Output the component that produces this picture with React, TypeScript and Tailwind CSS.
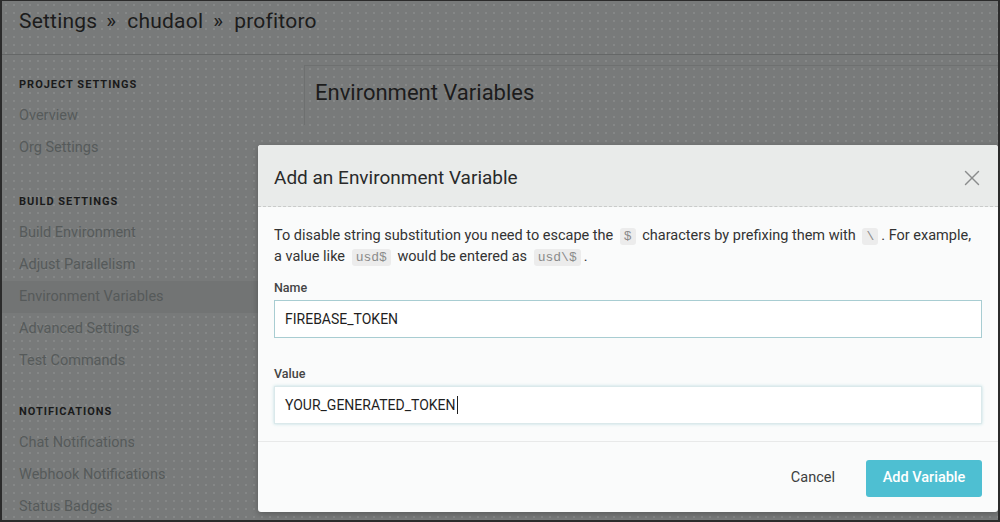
import { X } from "lucide-react";

const sections = [
  { title: "PROJECT SETTINGS", items: ["Overview", "Org Settings"] },
  {
    title: "BUILD SETTINGS",
    items: ["Build Environment", "Adjust Parallelism", "Environment Variables", "Advanced Settings", "Test Commands"],
  },
  { title: "NOTIFICATIONS", items: ["Chat Notifications", "Webhook Notifications", "Status Badges"] },
];

const sectionGap = ["", "mt-[23px]", "mt-[20px]"];

const Code = ({ children }: { children: string }) => (
  <code className="mx-[3px] rounded-[3px] bg-[#ececec] px-[4px] py-[1px] font-['Liberation_Mono',monospace] text-[13px] text-[#8a8a8a]">
    {children}
  </code>
);

export default function App() {
  return (
    <div className="relative h-[522px] w-[1000px] overflow-hidden border-x-2 border-t border-b-2 border-[#2b2b2b] bg-[#787a7a] font-['Roboto',sans-serif] bg-[radial-gradient(#858787_1px,transparent_1px)] bg-[length:8px_8px]">
      <header className="flex h-[54px] items-start border-b border-[#656767] pl-[17px] pt-[5px]">
        <h1 className="flex text-[21px] tracking-[0.2px] text-[#1c1c1c]">
          <span>Settings</span>
          <span className="mr-[11px] ml-[9px]">»</span>
          <span>chudaol</span>
          <span className="mr-[11px] ml-[10px]">»</span>
          <span>profitoro</span>
        </h1>
      </header>

      <div className="flex">
        <nav className="w-[296px] pt-[15px]">
          {sections.map((s, i) => (
            <div key={s.title} className={sectionGap[i]}>
              <div className="flex h-[30px] items-center pl-[17px] text-[11px] font-bold tracking-[1px] text-[#1a1a1a]">
                {s.title}
              </div>
              {s.items.map((item) => (
                <div
                  key={item}
                  className={`flex h-8 items-center pl-[17px] text-[14.5px] text-[#565a5a] ${
                    item === "Environment Variables" ? "bg-[#727474]" : ""
                  }`}
                >
                  {item}
                </div>
              ))}
            </div>
          ))}
        </nav>

        <main className="flex-1 pt-[10px] pl-[6px]">
          <div className="h-[60px] border-t border-l border-[#6e7070] pl-[10px] pt-[10px]">
            <h2 className="text-[22px] text-[#1c1c1c]">Environment Variables</h2>
          </div>
        </main>
      </div>

      <div className="absolute top-[144px] left-[256px] flex h-[367px] w-[740px] flex-col overflow-hidden rounded-[3px] bg-[#fafbfb] shadow-[0_2px_6px_rgba(0,0,0,0.25)]">
        <div className="flex h-[62px] shrink-0 items-center justify-between border-b border-dashed border-[#c9cbca] bg-[#e9ebea] pt-[5px] pr-[13px] pl-[16px]">
          <h3 className="text-[19px] text-[#2a2a2a]">Add an Environment Variable</h3>
          <X size={26} strokeWidth={1.3} className="text-[#8a8c8c]" />
        </div>

        <div className="flex flex-col px-[16px] pt-[19px]">
          <p className="text-[14.5px] leading-[20px] text-[#333]">
            To disable string substitution you need to escape the <Code>$</Code> characters by prefixing them with{" "}
            <Code>\</Code>. For example, a value like <Code>usd$</Code> would be entered as <Code>usd\$</Code>.
          </p>

          <label className="mt-[12px] text-[12.5px] leading-[16px] font-medium text-[#444]">Name</label>
          <div className="mt-[4px] flex h-[38px] items-center border border-[#a8cdd2] bg-white px-[10px] text-[14px] text-[#1f1f1f]">
            FIREBASE_TOKEN
          </div>

          <label className="mt-[28px] text-[12.5px] leading-[16px] font-medium text-[#444]">Value</label>
          <div className="mt-[4px] flex h-[38px] items-center border border-[#dbe9eb] bg-white px-[10px] text-[14px] text-[#1f1f1f] shadow-[0_0_3px_rgba(120,190,200,0.45)]">
            YOUR_GENERATED_TOKEN
            <span className="ml-[1px] h-[18px] w-px bg-[#1f1f1f]" />
          </div>
        </div>

        <div className="mt-[17px] flex flex-1 items-center justify-end gap-[31px] border-t border-[#e8e9e9] pt-[2px] pr-[16px]">
          <span className="text-[14.5px] text-[#3d4040]">Cancel</span>
          <button className="h-[37px] w-[116px] rounded-[3px] bg-[#4ebfd2] text-[14.5px] font-medium text-white">
            Add Variable
          </button>
        </div>
      </div>
    </div>
  );
}
